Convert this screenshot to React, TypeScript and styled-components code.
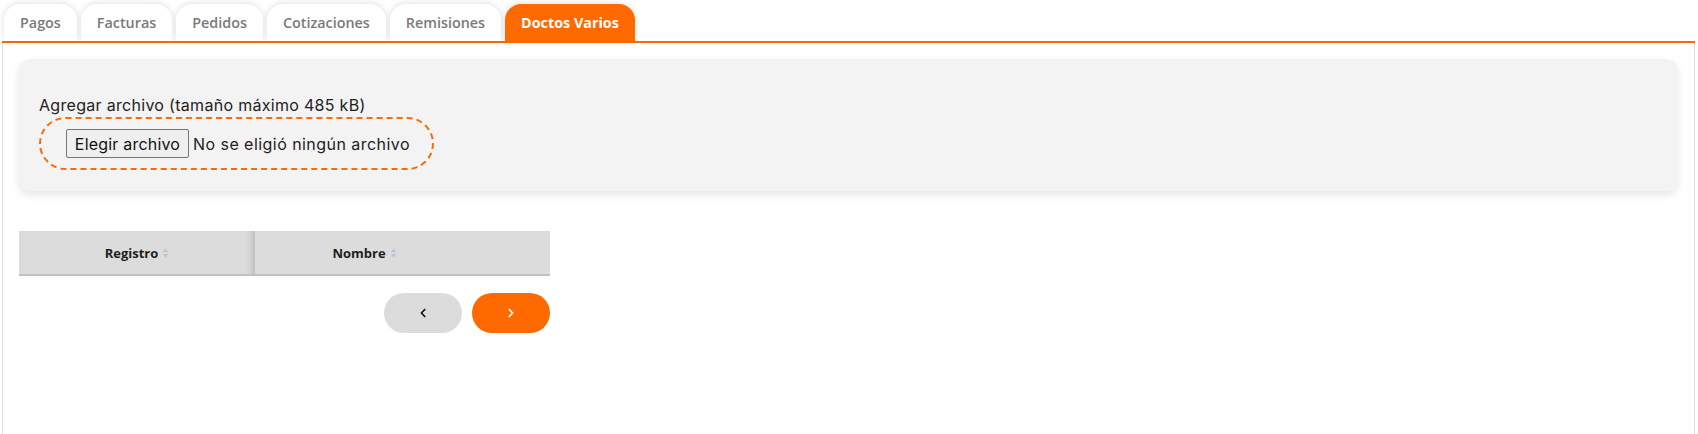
import React, { useState } from "react";
import styled, { createGlobalStyle } from "styled-components";
import { FaChevronLeft, FaChevronRight } from "react-icons/fa";

const GlobalStyle = createGlobalStyle`
  html, body {
    margin: 0;
    padding: 0;
    background: #ffffff;
  }
  body {
    font-family: "Open Sans", "Liberation Sans", sans-serif;
  }
`;

const tabs = ["Pagos", "Facturas", "Pedidos", "Cotizaciones", "Remisiones", "Doctos Varios"];

const columns = [
  { label: "Registro", width: 236, offset: 0 },
  { label: "Nombre", width: 295, offset: 76 },
];

const SortIcon = () => (
  <svg width="7" height="10" viewBox="0 0 7 10" aria-hidden="true">
    <path d="M3.5 0.5 L6.5 4 L0.5 4 Z" fill="#bcc5d6" />
    <path d="M3.5 9.5 L6.5 6 L0.5 6 Z" fill="#bcc5d6" />
  </svg>
);

const App = () => {
  const [active, setActive] = useState("Doctos Varios");

  return (
    <Page>
      <GlobalStyle />
      <TabList>
        {tabs.map((t) => (
          <Tab key={t} $active={t === active} onClick={() => setActive(t)}>
            {t}
          </Tab>
        ))}
      </TabList>
      <Panel>
        <UploadCard>
          <UploadLabel>Agregar archivo (tamaño máximo 485 kB)</UploadLabel>
          <DropZone>
            <HiddenInput type="file" />
            <FileButton>Elegir archivo</FileButton>
            <FileName>No se eligió ningún archivo</FileName>
          </DropZone>
        </UploadCard>

        <TableWrap>
          <Table>
            <thead>
              <tr>
                {columns.map((c, i) => (
                  <HeadCell key={c.label} $width={c.width} $offset={c.offset} $first={i === 0}>
                    <HeadInner>
                      {c.label}
                      <SortIcon />
                    </HeadInner>
                  </HeadCell>
                ))}
              </tr>
            </thead>
            <tbody />
          </Table>
          <Pager>
            <PageButton $variant="prev" aria-label="Anterior">
              <FaChevronLeft size={10} />
            </PageButton>
            <PageButton $variant="next" aria-label="Siguiente">
              <FaChevronRight size={10} />
            </PageButton>
          </Pager>
        </TableWrap>
      </Panel>
    </Page>
  );
};

const Page = styled.div`
  width: 1693px;
  margin-left: 2px;
  height: 434px;
  display: flex;
  flex-direction: column;
`;

const TabList = styled.div`
  display: flex;
  gap: 4px;
  padding: 4px 0 0 2px;
  border-bottom: 2px solid #ff6a00;
`;

const Tab = styled.button<{ $active: boolean }>`
  height: 37px;
  padding: 0 16px;
  border: 0;
  border-radius: 16px 16px 0 0;
  background: ${(p) => (p.$active ? "#ff6a00" : "#ffffff")};
  color: ${(p) => (p.$active ? "#ffffff" : "#7a7a7a")};
  font-family: "Open Sans", "Liberation Sans", sans-serif;
  font-size: 14.35px;
  font-weight: ${(p) => (p.$active ? 700 : 600)};
  box-shadow: 0 -1px 6px rgba(0, 0, 0, 0.12);
  cursor: pointer;
`;

const Panel = styled.div`
  flex: 1;
  border-left: 1px solid #d6deeb;
  border-right: 1px solid #d6deeb;
  padding: 16px;
`;

const UploadCard = styled.div`
  background: #f3f3f3;
  border-radius: 12px;
  padding: 34px 20px 21px;
  box-shadow: 0 4px 8px rgba(0, 0, 0, 0.1);
  margin-bottom: 40px;
`;

const UploadLabel = styled.div`
  font-family: Inter, "Noto Sans", sans-serif;
  font-size: 16px;
  line-height: 24px;
  color: #222222;
  letter-spacing: 0.3px;
`;

const DropZone = styled.label`
  display: inline-flex;
  align-items: center;
  box-sizing: border-box;
  width: 395px;
  height: 53px;
  padding: 0 25px;
  border: 2px dashed #ff6a00;
  border-radius: 27px;
  cursor: pointer;
`;

const HiddenInput = styled.input`
  display: none;
`;

const FileButton = styled.span`
  display: inline-flex;
  flex-shrink: 0;
  align-items: center;
  justify-content: center;
  box-sizing: border-box;
  width: 123px;
  height: 29px;
  background: #efefef;
  border: 1px solid #767676;
  border-radius: 2px;
  font-family: Inter, "Noto Sans", sans-serif;
  font-size: 16px;
  color: #111111;
  letter-spacing: 0.2px;
`;

const FileName = styled.span`
  margin-left: 4px;
  font-family: Inter, "Noto Sans", sans-serif;
  font-size: 16px;
  color: #222222;
  letter-spacing: 0.45px;
  white-space: nowrap;
`;

const TableWrap = styled.div`
  width: 531px;
`;

const Table = styled.table`
  width: 531px;
  border-collapse: collapse;
  table-layout: fixed;
`;

const HeadCell = styled.th<{ $width: number; $offset: number; $first: boolean }>`
  box-sizing: border-box;
  width: ${(p) => p.$width}px;
  height: 44px;
  padding: 0 ${(p) => p.$offset}px 0 0;
  background: #dcdcdc;
  border-bottom: 2px solid #c0c0c0;
  font-family: "Open Sans", "Liberation Sans", sans-serif;
  font-size: 13px;
  font-weight: 700;
  color: #1e1e1e;
  text-align: center;
  box-shadow: ${(p) => (p.$first ? "inset -10px 0 8px -8px rgba(0, 0, 0, 0.18)" : "none")};
`;

const HeadInner = styled.span`
  display: inline-flex;
  align-items: center;
  gap: 4px;
`;

const Pager = styled.div`
  display: flex;
  justify-content: flex-end;
  gap: 10px;
  margin-top: 17px;
`;

const PageButton = styled.button<{ $variant: "prev" | "next" }>`
  width: 78px;
  height: 40px;
  border: 0;
  border-radius: 20px;
  display: flex;
  align-items: center;
  justify-content: center;
  background: ${(p) => (p.$variant === "next" ? "#ff6a00" : "#dcdcdc")};
  color: ${(p) => (p.$variant === "next" ? "#ffffff" : "#111111")};
  cursor: pointer;
`;

export default App;
